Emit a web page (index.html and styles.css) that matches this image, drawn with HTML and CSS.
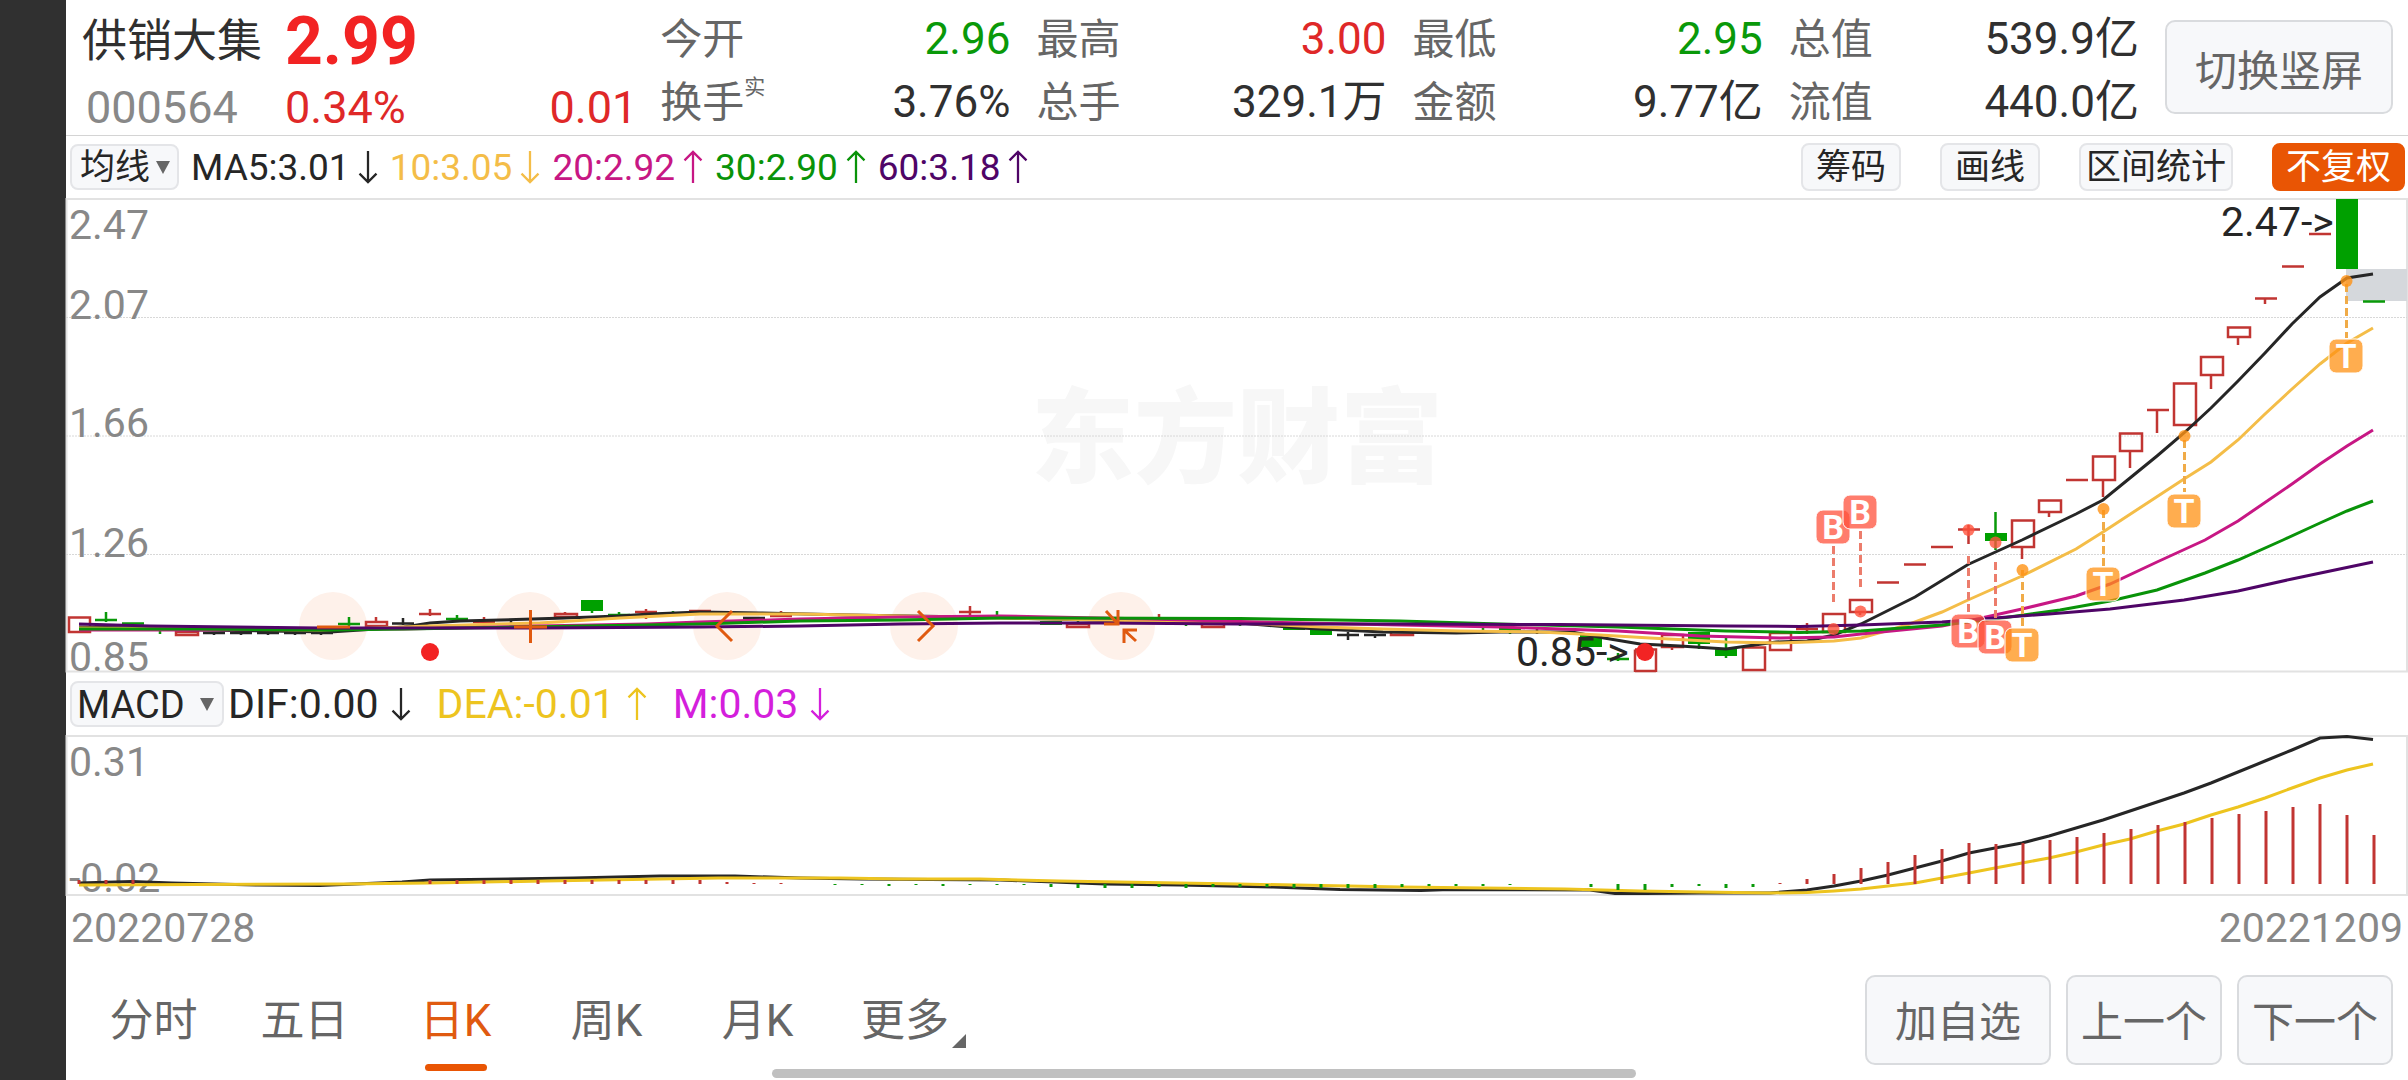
FILE: index.html
```html
<!DOCTYPE html>
<html lang="zh-CN">
<head>
<meta charset="utf-8">
<meta name="viewport" content="width=device-width, initial-scale=1">
<title>供销大集 000564</title>
<link rel="stylesheet" href="styles.css">
</head>
<body>
<svg class="defs" aria-hidden="true">
  <symbol id="down" viewBox="0 0 20 36"><path d="M10 1V34M1 25L10 34L19 25" fill="none" stroke="currentColor" stroke-width="2.4"/></symbol>
  <symbol id="up" viewBox="0 0 20 36"><path d="M10 35V2M1 11L10 2L19 11" fill="none" stroke="currentColor" stroke-width="2.4"/></symbol>
  <symbol id="caret" viewBox="0 0 14 13"><path d="M0 0H14L7 13Z" fill="#666"/></symbol>
</svg>
<div class="cutout"></div>
<main class="screen">
  <header class="quote">
    <div class="stock">
      <h1 class="name">供销大集</h1><strong class="price red">2.99</strong><span></span>
      <span class="code">000564</span><span class="red">0.34%</span><span class="red change">0.01</span>
    </div>
    <dl class="pair">
      <div><dt>今开</dt><dd class="green">2.96</dd></div>
      <div><dt>换手<sup>实</sup></dt><dd>3.76%</dd></div>
    </dl>
    <dl class="pair">
      <div><dt>最高</dt><dd class="red">3.00</dd></div>
      <div><dt>总手</dt><dd>329.1万</dd></div>
    </dl>
    <dl class="pair">
      <div><dt>最低</dt><dd class="green">2.95</dd></div>
      <div><dt>金额</dt><dd>9.77亿</dd></div>
    </dl>
    <dl class="pair">
      <div><dt>总值</dt><dd>539.9亿</dd></div>
      <div><dt>流值</dt><dd>440.0亿</dd></div>
    </dl>
    <button class="btn" type="button">切换竖屏</button>
  </header>

  <section class="bar ma">
    <label class="picker"><select aria-label="主图指标"><option>均线</option></select><svg class="caret"><use href="#caret"/></svg></label>
    <span class="val">MA5:3.01<svg><use href="#down"/></svg></span>
    <span class="val c10">10:3.05<svg><use href="#down"/></svg></span>
    <span class="val c20">20:2.92<svg><use href="#up"/></svg></span>
    <span class="val green">30:2.90<svg><use href="#up"/></svg></span>
    <span class="val c60">60:3.18<svg><use href="#up"/></svg></span>
    <div class="tools">
      <button type="button">筹码</button>
      <button type="button">画线</button>
      <button type="button" class="range">区间统计</button>
      <button type="button" class="on">不复权</button>
    </div>
  </section>

  <svg class="chart" viewBox="66 198 2342 475" role="img" aria-label="日K线图">
    <text class="mark" x="1031" y="475">东方财富</text>
    <path class="frame" d="M66.500 199H2407V671.500H66.500Z"/>
    <path class="grid" d="M66 317.500H2407M66 436H2407M66 554.500H2407"/>
    <g class="halo"><circle cx="333" cy="626" r="34"/><circle cx="530" cy="626" r="34"/><circle cx="727" cy="626" r="34"/><circle cx="924" cy="626" r="34"/><circle cx="1121" cy="626" r="34"/></g>
    <rect x="2346" y="269" width="61" height="32" fill="#d5d8dc"/>
    <g class="axis"><text x="69" y="239">2.47</text><text x="69" y="319">2.07</text><text x="69" y="437">1.66</text><text x="69" y="557">1.26</text><text x="69" y="671">0.85</text></g>

    <path class="k g" d="M95 620H117M106 612V622M122 623.500H144M160 626V634M338 624H360M349 617V626M446 619H468M457 615V621M592 610V613M608 615H630M619 612V616M673 611V614M727 611V616M997 611V615M1078 620V625M1186 623V626M1240 623V626M1418 632H1440M1483 627V632M1499 629H1521M1510 629V634M1607 659H1629M1618 653V661M1699 632V649M1726 637V658M1995.500 512V550M2363 301.500H2385"/>
    <path class="fg" d="M581 600H603V611H581ZM1040 621H1062V625H1040ZM1283 627H1305V630H1283ZM1310 628H1332V635H1310ZM1580 635H1602V647H1580ZM1688 632H1710V644H1688ZM1715 648H1737V656H1715ZM1985 533H2007V541H1985ZM2336 199H2358V269H2336Z"/>
    <path class="k b" d="M203 633H225M230 633H252M257 633H279M284 633H306M311 633H333M214 633V635M241 633V635M268 633V635M295 633V635M321 633V635M392 623.500H414M403 618V625M511 619V623M743 618H765M1337 635H1359M1348 632V640M1364 635H1386M1375 635V638M1445 632H1467M1537 629V634"/>
    <path class="k r" d="M69 617.500H90V632H69ZM176 632H198V635H176ZM366 622H387V626H366ZM376 617V622M419 614H441M430 609V616M473 622H495M484 617V622M555 614H577V617H555ZM565 612V614M635 612H657M646 609V619M689 611H711M770 616H792M781 611V616M959 612H981M970 606V615M1067 624H1089V627H1067ZM1159 614V617M1202 624H1224V627H1202ZM1391 632H1413V635H1391ZM1635 649.500H1656V672M1635 649.500V672M1635 671H1656M1662 635H1683V647H1662ZM1672 647V650M1743 647.500H1765V670H1743ZM1753 641V647M1770 633H1791V650H1770ZM1796 629H1818M1807 623V634M1823 614H1845V632H1823ZM1850 600H1872V612H1850ZM1860 612V615M1877 582.500H1899M1904 564.500H1926M1931 547H1953M1958 529.500H1980M1968.500 525V544M2012 520.500H2034V547H2012ZM2022 547V559M2039 500.500H2061V512H2039ZM2049 512V517M2066 480H2088M2093 456.500H2115V480H2093ZM2103 480V497M2120 433.500H2142V451H2120ZM2130 451V468M2147 410H2169M2157 410V433M2174 383.500H2196V425H2174ZM2201 357H2223V375H2201ZM2211 375V389M2228 327.500H2250V337H2228ZM2238 337V345M2255 298.500H2277M2265 298V304M2282 266.500H2304M2309 234H2331"/>

    <g class="line">
      <path stroke="#262626" d="M79 627L133 628L200 630L330 632L376 629L404 627L430 623L460 621L500 620L565 618L619 616L650 614L700 612L760 613L850 615L970 617L1050 619L1130 621L1240 623L1300 628L1383 632L1456 633L1500 632L1572 632L1604 638L1640 644L1680 646L1726 649L1776 642L1807 641L1834 635L1861 624L1915 597L1968 564.500L2022 540L2076 514L2103 500L2130 478L2157 456L2184 433L2211 408L2238 381L2265 353L2292 324L2320 297L2347 278L2373 274"/>
      <path stroke="#f4bd48" d="M79 628L320 630L430 626L540 623L620 618L700 614L800 614L900 616L1000 618L1150 621L1240 623L1321 627L1383 629L1460 631L1540 632L1600 635L1650 638L1726 642L1780 643L1834 641L1861 638L1907 625L1942 612L1968 600L2022 576L2076 549L2103 532L2184 479L2211 462L2238 440L2265 414L2292 389L2320 364L2347 343L2373 328"/>
      <path stroke="#c71784" d="M79 630L200 630L320 629L404 629L538 626L646 624L700 622L800 619L900 617L1000 616L1050 617L1150 619L1240 621.500L1400 625L1500 627L1618 631L1700 636L1780 638L1834 637L1861 634L1942 626L1968 621L1995 615L2022 609L2076 596L2110 584L2157 562L2205 540L2238 521L2292 484L2320 464L2347 446L2373 430"/>
      <path stroke="#099309" d="M79 629L200 629L330 630L404 629L646 625L700 624L800 621L900 620L1000 618L1050 618L1240 618.500L1400 621L1500 624L1618 627L1726 631L1800 632.500L1861 631L1942 625L1995 619L2060 610L2110 601L2157 590L2205 573L2238 560L2283 540L2320 523L2347 511L2373 501"/>
      <path stroke="#4f0567" d="M79 624L150 626L320 628L538 628L700 627L800 626L900 624L1000 623L1100 623L1240 624L1400 624L1560 624.500L1726 626L1800 626.500L1861 625L1942 622L1995 618L2049 614L2110 609L2184 600L2238 591L2292 579L2373 562"/>
    </g>

    <g class="note"><text x="2221" y="236">2.47-&gt;</text><text x="1516" y="666">0.85-&gt;</text></g>

    <g class="icon"><path d="M317 627H350"/><path d="M514 627H547M530.500 610V643"/><path d="M732 611L717 626L732 641"/><path d="M918 611L933 626L918 641"/><path d="M1106 611L1118 624M1118 610V624H1104M1124 643V630H1137M1124 630L1136 641"/></g>
    <circle cx="430" cy="652" r="9" fill="#f22323"/><circle cx="1645" cy="652" r="9" fill="#f22323"/>

    <g class="tagb">
      <path d="M1833.500 546V602M1860.500 531V588M1968.500 556V612M1995.500 562V618"/>
      <circle cx="1833.500" cy="629" r="6"/><circle cx="1860.500" cy="611.500" r="6"/><circle cx="1968.500" cy="530" r="6"/><circle cx="1995.500" cy="542.500" r="6"/>
      <rect x="1816" y="510" width="34" height="34" rx="7"/><text x="1833" y="539">B</text>
      <rect x="1843" y="495" width="34" height="34" rx="7"/><text x="1860" y="524">B</text>
      <rect x="1951" y="614" width="34" height="34" rx="7"/><text x="1968" y="643">B</text>
      <rect x="1978" y="620" width="34" height="34" rx="7"/><text x="1995" y="649">B</text>
    </g>
    <g class="tagt">
      <path d="M2022.500 570V626M2103.500 510V566M2184.500 440V492M2346.500 284V338"/>
      <circle cx="2022.500" cy="570" r="6"/><circle cx="2103.500" cy="509" r="6"/><circle cx="2184.500" cy="436" r="6"/><circle cx="2346.500" cy="281" r="6"/>
      <rect x="2005" y="628" width="34" height="34" rx="7"/><text x="2022" y="657">T</text>
      <rect x="2086" y="567" width="34" height="34" rx="7"/><text x="2103" y="596">T</text>
      <rect x="2167" y="494" width="34" height="34" rx="7"/><text x="2184" y="523">T</text>
      <rect x="2329" y="339" width="34" height="34" rx="7"/><text x="2346" y="368">T</text>
    </g>
  </svg>

  <section class="bar macd">
    <label class="picker wide"><select aria-label="副图指标"><option>MACD</option></select><svg class="caret"><use href="#caret"/></svg></label>
    <span class="val">DIF:0.00<svg><use href="#down"/></svg></span>
    <span class="val dea">DEA:-0.01<svg><use href="#up"/></svg></span>
    <span class="val m">M:0.03<svg><use href="#down"/></svg></span>
  </section>

  <svg class="chart" viewBox="66 735 2342 161" role="img" aria-label="MACD">
    <path class="frame" d="M66.500 736H2407V895H66.500Z"/>
    <g class="axis"><text x="69" y="776">0.31</text><text x="69" y="892">-0.02</text></g>
    <path class="line" stroke="#262626" d="M79 883L132 881.500L172 883L258 885L320 885.500L402 882L430 880L574 878L660 876L735 876L800 878L861 879L1000 880L1054 882L1105 884L1180 885L1273 887L1340 889.500L1421 890.500L1450 889.500L1590 890L1615 893.500L1645 893.500L1700 893L1770 893L1807 890L1834 886L1861 881L1888 875L1915 868L1942 861L1969 853L1995 848L2022 843L2049 836L2076 828L2103 820L2130 811L2157 802L2184 793L2211 783L2238 772L2265 761L2292 750L2320 738L2347 736.500L2373 739.500"/>
    <path class="line" stroke="#edc41f" d="M79 885L344 884L430 883L545 881L718 878L840 878L900 879L980 879L1059 881L1238 884L1401 887L1565 889L1640 891L1700 892L1770 893L1807 892.500L1834 891L1861 889L1888 886L1915 883L1942 878L1969 873L1995 868L2022 863L2049 858L2076 852L2103 845L2130 839L2157 831L2184 824L2211 815L2238 807L2265 798L2292 788L2320 778L2347 770L2373 764"/>
    <path class="bars r" d="M79 880V884M106 880V884M133 880V884M430 880V884M457 880V884M484 880V884M511 880V884M538 880V884M565 880V884M592 880V884M619 880V884M646 880V884M673 880V884M700 880V884M727 882V884M754 883V884M781 883V884M1780 883V884M1807 879V884M1834 874V884M1861 868V884M1888 862V884M1915 855V884M1942 849V884M1969 843V884M1996 844V884M2023 843V884M2050 840V884M2077 837V884M2104 833V884M2131 829V884M2158 825V884M2185 822V884M2212 818V884M2239 814V884M2266 811V884M2293 807V884M2320 804V884M2347 815V884M2374 835V884"/>
    <path class="bars g" d="M835 884V885M862 884V885M889 884V886M916 884V885M943 884V886M970 884V885M997 884V885M1024 884V885M1051 884V887M1078 884V888M1105 884V888M1132 884V888M1159 884V887M1186 884V888M1213 884V887M1240 884V887M1267 884V887M1294 884V888M1321 884V888M1348 884V888M1375 884V888M1402 884V887M1429 884V886M1456 884V886M1483 884V886M1510 884V885M1591 884V887M1618 884V890M1645 884V890M1672 884V887M1699 884V886M1726 884V888M1753 884V887"/>
  </svg>

  <div class="dates"><time>20220728</time><time>20221209</time></div>

  <footer class="foot">
    <nav class="tabs">
      <button type="button">分时</button>
      <button type="button">五日</button>
      <button type="button" class="active">日K</button>
      <button type="button">周K</button>
      <button type="button">月K</button>
      <button type="button" class="more">更多<svg class="corner" viewBox="0 0 14 14"><path d="M14 0V14H0Z" fill="#666"/></svg></button>
    </nav>
    <div class="actions">
      <button type="button" class="btn add">加自选</button>
      <button type="button" class="btn">上一个</button>
      <button type="button" class="btn">下一个</button>
    </div>
  </footer>
</main>
<div class="home"></div>
</body>
</html>
```
FILE: styles.css
```css
* { box-sizing: border-box; }

body {
  margin: 0;
  min-height: 100vh;
  display: flex;
  position: relative;
  background: #fff;
  color: #303030;
  font-family: Roboto, "Noto Sans CJK SC", sans-serif;
  font-size: 44px;
}

button, select {
  font: inherit;
  color: inherit;
  margin: 0;
  padding: 0;
  border: 0;
  background: none;
}

h1, dl, dd { margin: 0; font-weight: 400; }

.defs { position: absolute; width: 0; height: 0; }
.cutout { flex: 0 0 66px; background: #303030; }
.screen { flex: 1; min-width: 0; }

.red { color: #df2828; }
.green { color: #099909; }

/* Quote header */
.quote {
  display: grid;
  grid-template-columns: 552fr repeat(4, 350fr) 228fr;
  column-gap: 26px;
  padding: 4px 15px 1px 16px;
  border-bottom: 1px solid #d4d4d4;
}

.stock {
  display: grid;
  grid-template-columns: 203px 1fr auto;
  grid-template-rows: 52px 52px;
  row-gap: 14px;
  margin-right: -3px;
  padding-top: 12px;
  align-items: center;
  font-size: 45px;
  line-height: 52px;
}

.name { font-size: 45px; }
.price { font-size: 66px; font-weight: 700; color: #f22323; }
.code { color: #888; padding-left: 4px; }
.pair { padding-top: 4px; }
.pair > div {
  display: flex;
  justify-content: space-between;
  height: 63px;
  line-height: 63px;
}
.pair dt { display: flex; color: #666; font-size: 42px; }
.pair sup {
  font-size: 21px;
  line-height: 32px;
}

.btn {
  border: 2px solid #d9dbde;
  border-radius: 10px;
  background: #f7f8fa;
  color: #666;
  font-size: 42px;
}
.quote .btn { margin: 16px 0 20px; }

/* Indicator rows */
.bar {
  display: flex;
  align-items: center;
  height: 62px;
  padding: 0 3px 0 4px;
  gap: 12px;
  font-size: 37px;
}
.macd { font-size: 41px; gap: 26px; }

.picker {
  display: flex;
  align-items: center;
  gap: 5px;
  height: 46px;
  padding: 0 7px 0 8px;
  border: 2px solid #e4e5e8;
  border-radius: 8px;
  background: #f7f8fa;
  color: #262626;
  font-size: 35px;
}
.picker select { appearance: none; height: 42px; }
.picker.wide {
  gap: 15px;
  padding: 0 8px 0 5px;
  margin-right: -22px;
  font-size: 38px;
}
.caret { width: 14px; height: 13px; }

.val { display: flex; align-items: center; gap: 8px; color: #262626; }
.val svg { width: 20px; height: 34px; }
.macd .val { gap: 12px; }
.val.c10 { color: #f4bd48; }
.val.c20 { color: #c71784; }
.val.green { color: #099309; }
.val.c60 { color: #4f0567; }
.val.dea { color: #edc41f; }
.val.m { color: #d41fdc; }

.tools { display: flex; gap: 39px; margin-left: auto; }
.tools button {
  height: 48px;
  padding: 2px 13px 0;
  border: 2px solid #e4e5e8;
  border-radius: 8px;
  background: #f7f8fa;
  color: #262626;
  font-size: 35px;
  line-height: 42px;
}
.tools .range { padding: 2px 5px 0; }
.tools .on {
  padding: 2px 12px 0;
  border-color: #e95504;
  background: #e95504;
  color: #fff;
}

/* Charts */
.chart { display: block; width: 100%; height: auto; overflow: visible; }
.chart text { font-size: 41px; }
.chart .mark { font-size: 103px; font-weight: 900; fill: #f7f7f7; }
.frame { fill: none; stroke: #e2e2e2; stroke-width: 2; }
.grid { stroke: #d8d8d8; stroke-width: 1; stroke-dasharray: 2 1; }
.axis { fill: #888; }
.note { fill: #262626; }
.halo { fill: #fef1ea; }
.icon { fill: none; stroke: #e05a10; stroke-width: 3; }
.line { fill: none; stroke-width: 3; }
.k { fill: none; stroke-width: 2.5; }
.bars { stroke-width: 3; }
.r { stroke: #c13532; }
.g { stroke: #099909; }
.b { stroke: #262626; }
.fg { fill: #00a000; }

.tagb path, .tagt path { stroke-width: 3; stroke-dasharray: 8 4; fill: none; }
.tagb path { stroke: #ec7d6c; }
.tagt path { stroke: #f0ab48; }
.tagb circle { fill: #ff523c; fill-opacity: .8; }
.tagt circle { fill: #ff9214; fill-opacity: .8; }
.tagb rect, .tagt rect { stroke: #fff; stroke-width: 1; }
.tagb rect { fill: #ff523c; fill-opacity: .75; }
.tagt rect { fill: #ff9214; fill-opacity: .75; }
.chart .tagb text, .chart .tagt text {
  fill: #fff;
  font-size: 34px;
  font-weight: 700;
  text-anchor: middle;
}

.dates {
  display: flex;
  justify-content: space-between;
  padding: 0 5px;
  color: #888;
  font-size: 41px;
  line-height: 64px;
}

/* Period tabs and actions */
.foot {
  display: flex;
  justify-content: space-between;
  align-items: flex-start;
  padding: 0 15px 0 12px;
  color: #666;
}
.tabs { display: flex; font-size: 44px; }
.tabs button {
  width: 151px;
  padding-top: 31px;
  line-height: 60px;
}
.tabs button::after {
  content: "";
  display: block;
  width: 62px;
  height: 7px;
  margin: 13px auto 0;
  border-radius: 4px;
}
.tabs .active { color: #e05a10; }
.tabs .active::after { background: #e95504; }
.tabs .more { padding-left: 10px; }
.corner { width: 14px; height: 14px; margin-left: 3px; vertical-align: -12px; }

.actions { display: flex; gap: 15px; padding-top: 15px; }
.actions .btn { width: 156px; height: 90px; padding-bottom: 3px; }
.actions .add { width: 186px; }

/* System gesture bar, floats above the page */
.home {
  position: absolute;
  left: 50%;
  bottom: 2px;
  width: 864px;
  height: 9px;
  margin-left: -432px;
  border-radius: 5px;
  background: #c0c0c0;
}
```
